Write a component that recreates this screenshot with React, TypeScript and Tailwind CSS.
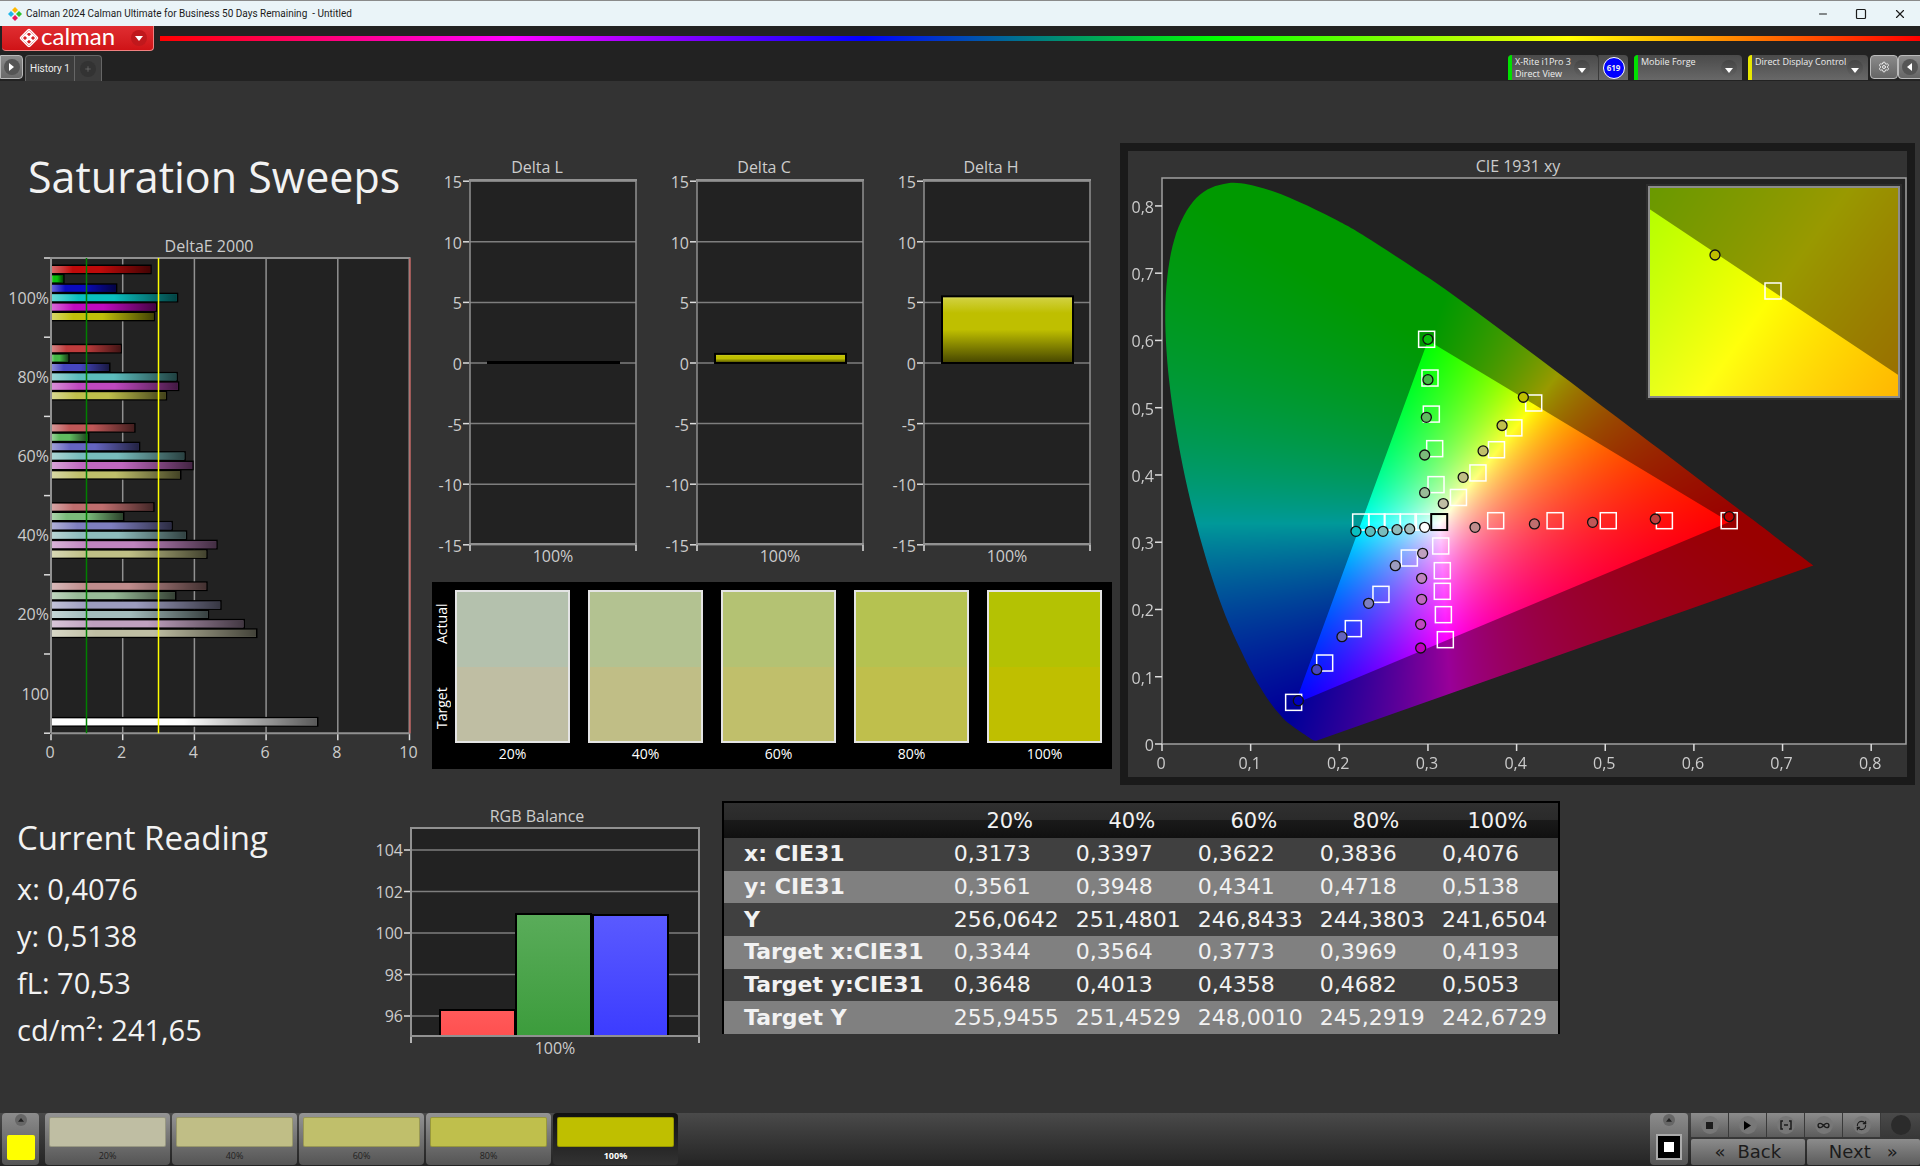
import { useLayoutEffect, useRef } from 'react';
import type { ReactNode } from 'react';
import { Infinity as InfinityIcon, Minus, Plus, RefreshCw, Settings, Square, X } from 'lucide-react';

type Point = [number, number];

const steps = ['20%', '40%', '60%', '80%', '100%'];
const targetColors = ['#bfbea3', '#c0be86', '#c0bf6b', '#bfbf4c', '#bfbf00'];
const actualColors = ['#b4c1ad', '#b3c291', '#b4c273', '#b5c251', '#b4c203'];

// red, green, blue, cyan, magenta, yellow, white
const deltaE = [
  {
    label: '100%',
    values: [2.81, 0.38, 1.85, 3.55, 2.96, 2.9, 0],
    colors: ['#bf0a0a', '#0abf0a', '#0a0abf', '#0abfbf', '#bf0abf', '#bfbf0a', '#ffffff'],
  },
  {
    label: '80%',
    values: [1.98, 0.52, 1.66, 3.54, 3.58, 3.24, 0],
    colors: ['#bf3c3c', '#45b945', '#4646bf', '#5cbcbc', '#bf48bf', '#bfbf4c', '#ffffff'],
  },
  {
    label: '60%',
    values: [2.36, 1.07, 2.49, 3.76, 3.98, 3.64, 0],
    colors: ['#bf5757', '#60bb60', '#6464bf', '#78bcbc', '#bf68bf', '#bfbf6b', '#ffffff'],
  },
  {
    label: '40%',
    values: [2.89, 2.05, 3.4, 3.8, 4.65, 4.37, 0],
    colors: ['#bf6e6e', '#7abb7a', '#7e7ebf', '#8ebcbc', '#bf84bf', '#bfbf86', '#ffffff'],
  },
  {
    label: '20%',
    values: [4.37, 3.5, 4.76, 4.41, 5.41, 5.76, 0],
    colors: ['#bf8c8c', '#98bb98', '#9c9cbf', '#a3bcbc', '#bfa0bf', '#bfbea3', '#ffffff'],
  },
  {
    label: '100',
    values: [0, 0, 0, 0, 0, 0, 7.46],
    colors: ['#ffffff', '#ffffff', '#ffffff', '#ffffff', '#ffffff', '#ffffff', '#ffffff'],
  },
];

const tableRows = [
  { label: 'x: CIE31', values: ['0,3173', '0,3397', '0,3622', '0,3836', '0,4076'] },
  { label: 'y: CIE31', values: ['0,3561', '0,3948', '0,4341', '0,4718', '0,5138'] },
  { label: 'Y', values: ['256,0642', '251,4801', '246,8433', '244,3803', '241,6504'] },
  { label: 'Target x:CIE31', values: ['0,3344', '0,3564', '0,3773', '0,3969', '0,4193'] },
  { label: 'Target y:CIE31', values: ['0,3648', '0,4013', '0,4358', '0,4682', '0,5053'] },
  { label: 'Target Y', values: ['255,9455', '251,4529', '248,0010', '245,2919', '242,6729'] },
];

const targets: Point[] = [
  [0.2241, 0.33], [0.2425, 0.33], [0.2598, 0.33], [0.2779, 0.33], [0.2945, 0.33],
  [0.3764, 0.332], [0.4434, 0.332], [0.5034, 0.332], [0.5667, 0.332], [0.6398, 0.332],
  [0.2985, 0.6017], [0.3023, 0.5441], [0.3038, 0.4905], [0.3076, 0.4391], [0.3091, 0.3856],
  [0.1485, 0.0619], [0.1835, 0.1204], [0.2158, 0.1715], [0.247, 0.2225], [0.279, 0.2765],
  [0.3196, 0.1551], [0.3174, 0.1923], [0.3162, 0.227], [0.3162, 0.2577], [0.3144, 0.2944],
  [0.3344, 0.3665], [0.3564, 0.403], [0.3773, 0.4375], [0.3969, 0.47], [0.4193, 0.507],
];

const readings: { at: Point; fill: string }[] = [
  { at: [0.2188, 0.3162], fill: '#0abfbf' },
  { at: [0.235, 0.3162], fill: '#5cbcbc' },
  { at: [0.2493, 0.3162], fill: '#78bcbc' },
  { at: [0.2651, 0.3186], fill: '#8ebcbc' },
  { at: [0.2794, 0.3197], fill: '#a3bcbc' },
  { at: [0.2963, 0.3221], fill: '#ffffff' },
  { at: [0.3531, 0.3221], fill: '#bf8c8c' },
  { at: [0.4201, 0.3272], fill: '#bf6e6e' },
  { at: [0.4857, 0.3296], fill: '#bf5757' },
  { at: [0.5565, 0.3345], fill: '#bf3c3c' },
  { at: [0.6398, 0.3382], fill: '#bf0000' },
  { at: [0.3, 0.6017], fill: '#0abf0a' },
  { at: [0.3, 0.5417], fill: '#45b945' },
  { at: [0.2982, 0.4857], fill: '#60bb60' },
  { at: [0.2963, 0.4297], fill: '#7abb7a' },
  { at: [0.2963, 0.3737], fill: '#98bb98' },
  { at: [0.1538, 0.0644], fill: '#0000bf' },
  { at: [0.1745, 0.1105], fill: '#4646bf' },
  { at: [0.203, 0.1596], fill: '#6464bf' },
  { at: [0.2331, 0.2091], fill: '#7e7ebf' },
  { at: [0.2632, 0.2651], fill: '#9c9cbf' },
  { at: [0.2918, 0.1427], fill: '#bf00bf' },
  { at: [0.2918, 0.1779], fill: '#bf48bf' },
  { at: [0.2929, 0.2151], fill: '#bf68bf' },
  { at: [0.2929, 0.2463], fill: '#bf84bf' },
  { at: [0.294, 0.2835], fill: '#bfa0bf' },
  { at: [0.3173, 0.3575], fill: '#bfbea3' },
  { at: [0.3397, 0.3965], fill: '#c0be86' },
  { at: [0.3622, 0.4358], fill: '#c0bf6b' },
  { at: [0.3836, 0.4735], fill: '#bfbf4c' },
  { at: [0.4076, 0.5155], fill: '#bfbf00' },
];

// CIE 1931 spectral locus, 380 nm to 700 nm
const locus: Point[] = [
  [0.1741, 0.005], [0.1714, 0.0051], [0.1689, 0.0069], [0.1644, 0.0109], [0.1566, 0.0177],
  [0.144, 0.0297], [0.1355, 0.0399], [0.1241, 0.0578], [0.1096, 0.0868], [0.0913, 0.1327],
  [0.0687, 0.2007], [0.0454, 0.295], [0.0235, 0.4127], [0.0082, 0.5384], [0.0039, 0.6548],
  [0.0139, 0.7502], [0.0389, 0.812], [0.0743, 0.8338], [0.1142, 0.8262], [0.1547, 0.8059],
  [0.1929, 0.7816], [0.2296, 0.7543], [0.3016, 0.6923], [0.3731, 0.6245], [0.4441, 0.5547],
  [0.5125, 0.4866], [0.5752, 0.4242], [0.627, 0.3725], [0.6658, 0.334], [0.6915, 0.3083],
  [0.719, 0.2809], [0.7347, 0.2653],
];

const gamut: Point[] = [[0.64, 0.33], [0.3, 0.6], [0.15, 0.06]];

function chromaticityToRgb(x: number, y: number) {
  const z = 1 - x - y;
  const r = Math.max(0, 3.2405 * x - 1.5371 * y - 0.4985 * z);
  const g = Math.max(0, -0.9693 * x + 1.876 * y + 0.0416 * z);
  const b = Math.max(0, 0.0556 * x - 0.204 * y + 1.0572 * z);
  const max = Math.max(r, g, b, 0.0001);
  return [(r / max) * 255, (g / max) * 255, (b / max) * 255];
}

interface ChromaticityProps {
  width: number;
  height: number;
  xRange: Point;
  yRange: Point;
}

function Chromaticity({ width, height, xRange, yRange }: ChromaticityProps) {
  const ref = useRef<HTMLCanvasElement>(null);

  useLayoutEffect(() => {
    const ctx = ref.current?.getContext('2d');
    if (!ctx) return;
    const [x0, x1] = xRange;
    const [y0, y1] = yRange;
    const toPx = ([x, y]: Point): Point => [
      ((x - x0) / (x1 - x0)) * width,
      height - ((y - y0) / (y1 - y0)) * height,
    ];

    const image = ctx.createImageData(width, height);
    for (let py = 0; py < height; py++) {
      for (let px = 0; px < width; px++) {
        const [r, g, b] = chromaticityToRgb(
          x0 + (px / width) * (x1 - x0),
          y0 + ((height - py) / height) * (y1 - y0),
        );
        const i = (py * width + px) * 4;
        image.data[i] = r;
        image.data[i + 1] = g;
        image.data[i + 2] = b;
        image.data[i + 3] = 255;
      }
    }
    ctx.globalCompositeOperation = 'source-over';
    ctx.putImageData(image, 0, 0);

    // Dim everything outside of the Rec.709 triangle
    const shade = new Path2D();
    shade.rect(0, 0, width, height);
    gamut.map(toPx).forEach(([x, y], i) => (i ? shade.lineTo(x, y) : shade.moveTo(x, y)));
    shade.closePath();
    ctx.fillStyle = 'rgba(0, 0, 0, 0.4)';
    ctx.fill(shade, 'evenodd');

    // Keep only the horseshoe
    const pts = locus.map(toPx);
    const shoe = new Path2D();
    shoe.moveTo(...pts[0]);
    for (let i = 0; i < pts.length - 1; i++) {
      const a = pts[Math.max(0, i - 1)];
      const b = pts[i];
      const c = pts[i + 1];
      const d = pts[Math.min(pts.length - 1, i + 2)];
      shoe.bezierCurveTo(
        b[0] + (c[0] - a[0]) / 6, b[1] + (c[1] - a[1]) / 6,
        c[0] - (d[0] - b[0]) / 6, c[1] - (d[1] - b[1]) / 6,
        c[0], c[1],
      );
    }
    shoe.closePath();
    ctx.globalCompositeOperation = 'destination-in';
    ctx.fillStyle = '#000';
    ctx.fill(shoe);
  }, [width, height, xRange, yRange]);

  return <canvas ref={ref} width={width} height={height} className="block w-full h-full" />;
}

function DeltaEChart() {
  const left = 51;
  const top = 24;
  const unit = 35.85;
  const group = 79.2;
  const bottom = top + group * 6;
  const right = left + unit * 10;

  return (
    <svg viewBox="0 0 424 535" className="block w-full" role="img" aria-label="DeltaE 2000">
      <defs>
        <linearGradient id="bar-shine">
          <stop offset="0" stopColor="#fff" stopOpacity="0.4" />
          <stop offset="0.22" stopColor="#fff" stopOpacity="0" />
          <stop offset="0.5" stopColor="#000" stopOpacity="0" />
          <stop offset="1" stopColor="#000" stopOpacity="0.65" />
        </linearGradient>
      </defs>
      <text x="209" y="18" textAnchor="middle" className="fill-[#ccc] text-base">DeltaE 2000</text>
      <rect x={left} y={top} width={right - left} height={bottom - top} fill="#222" />
      {[2, 4, 6, 8].map((v) => (
        <line key={v} x1={left + v * unit} x2={left + v * unit} y1={top} y2={bottom} stroke="#919191" strokeWidth="1.5" />
      ))}
      {deltaE.map(({ label, values, colors }, g) => (
        <g key={label}>
          <text x="49" y={top + group * (g + 0.5) + 6} textAnchor="end" className="fill-[#ccc] text-base">
            {label}
          </text>
          {values.map((v, i) =>
            v > 0 ? (
              <g key={i}>
                <rect x={left} y={top + group * g + 6.5 + i * 9.4} width={v * unit} height="9.8" fill="#000" />
                <rect x={left} y={top + group * g + 8 + i * 9.4} width={v * unit - 1.5} height="7" fill={colors[i]} />
                <rect x={left} y={top + group * g + 8 + i * 9.4} width={v * unit - 1.5} height="7" fill="url(#bar-shine)" />
              </g>
            ) : null,
          )}
        </g>
      ))}
      <path d={`M${left} ${bottom}V${top}H${right}V${bottom}H${left}`} fill="none" stroke="#919191" strokeWidth="2" />
      {[0, 1, 2, 3, 4, 5, 6].map((i) => (
        <line key={i} x1="44" x2="50" y1={top + group * i} y2={top + group * i} stroke="#ddd" strokeWidth="1.5" />
      ))}
      {[0, 2, 4, 6, 8, 10].map((v) => (
        <g key={v}>
          <line x1={left + v * unit} x2={left + v * unit} y1={bottom + 1} y2={bottom + 7} stroke="#ddd" strokeWidth="1.5" />
          <text x={left + v * unit - 1} y="524" textAnchor="middle" className="fill-[#ccc] text-base">{v}</text>
        </g>
      ))}
      <line x1="86.5" x2="86.5" y1={top} y2={bottom} stroke="#008000" strokeWidth="1.5" />
      <line x1="158.500" x2="158.500" y1={top} y2={bottom} stroke="#ff0" strokeWidth="1.5" />
      <line x1="410" x2="410" y1={top} y2={bottom} stroke="#d9534f" />
    </svg>
  );
}

function DeltaChart({ name, value }: { name: string; value: number }) {
  const yOf = (v: number) => 208 - v * 12.12;
  const barTop = yOf(Math.max(value, 0));

  return (
    <svg viewBox="0 0 227 415" className="block flex-1 min-w-0" role="img" aria-label={name}>
      <defs>
        <linearGradient id="delta-fill" x2="0" y2="1">
          <stop offset="0" stopColor="#dede6a" />
          <stop offset="0.05" stopColor="#cfcf38" />
          <stop offset="0.25" stopColor="#bfbf00" />
          <stop offset="0.5" stopColor="#bfbf00" />
          <stop offset="1" stopColor="#454500" />
        </linearGradient>
      </defs>
      <text x="113" y="18" textAnchor="middle" className="fill-[#ccc] text-base">{name}</text>
      <rect x="46" y="25" width="166" height="364" fill="#222" />
      {[15, 10, 5, 0, -5, -10, -15].map((v) => (
        <g key={v}>
          <line x1="46" x2="212" y1={yOf(v)} y2={yOf(v)} stroke="#7e7e7e" strokeWidth="1.5" />
          <line x1="39" x2="45" y1={yOf(v)} y2={yOf(v)} stroke="#ddd" strokeWidth="1.5" />
          <text x="38" y={yOf(v) + 7} textAnchor="end" className="fill-[#ccc] text-base">{v}</text>
        </g>
      ))}
      <path d="M46 390V25H212V390" fill="none" stroke="#919191" strokeWidth="1.5" />
      <path d="M45 25H213M45 389H213" stroke="#919191" strokeWidth="2" />
      <path d="M46 390V396M212 390V396" stroke="#ddd" strokeWidth="1.5" />
      {value > 0 ? (
        <rect x="64" y={barTop} width="131" height={208 - barTop} fill="url(#delta-fill)" stroke="#000" strokeWidth="2" />
      ) : (
        <rect x="63" y="206" width="133" height="3" fill="#000" />
      )}
      <text x="129" y="407" textAnchor="middle" className="fill-[#ccc] text-base">100%</text>
    </svg>
  );
}

const fullRange: Point = [0, 0.8415];
const insetX: Point = [0.3943, 0.4443];
const insetY: Point = [0.4803, 0.5303];

function CieChart() {
  const cx = (x: number) => 34 + x * 886.5;
  const cy = (y: number) => 593 - y * 672.6;
  const ticks = [0, 1, 2, 3, 4, 5, 6, 7, 8];

  return (
    <svg viewBox="0 0 779 626" className="block w-full" role="img" aria-label="CIE 1931 xy">
      <text x="390" y="21" textAnchor="middle" className="fill-[#ccc] text-base">CIE 1931 xy</text>
      <rect x="34" y="27" width="745" height="566" fill="#222" />
      <foreignObject x="34" y="27" width="746" height="566">
        <Chromaticity width={746} height={566} xRange={fullRange} yRange={fullRange} />
      </foreignObject>
      <rect x="34" y="27" width="744" height="566" fill="none" stroke="#a0a0a0" strokeWidth="1.5" />
      {ticks.map((t) => (
        <g key={t}>
          <line x1={cx(t / 10)} x2={cx(t / 10)} y1="593" y2="600" stroke="#ddd" strokeWidth="1.5" />
          <line x1="27" x2="34" y1={cy(t / 10)} y2={cy(t / 10)} stroke="#ddd" strokeWidth="1.5" />
          <text x={cx(t / 10) - 1} y="618" textAnchor="middle" className="fill-[#ccc] text-base">
            {t ? `0,${t}` : '0'}
          </text>
          <text x="26" y={cy(t / 10) + 7} textAnchor="end" className="fill-[#ccc] text-base">
            {t ? `0,${t}` : '0'}
          </text>
        </g>
      ))}
      {targets.map(([x, y]) => (
        <rect key={`${x}-${y}`} x={cx(x) - 8} y={cy(y) - 8} width="16" height="16" fill="none" stroke="#fff" strokeWidth="1.5" />
      ))}
      <rect x={cx(0.3127) - 8} y={cy(0.33) - 8} width="16" height="16" fill="none" stroke="#000" strokeWidth="2" />
      {readings.map(({ at: [x, y], fill }) => (
        <circle key={`${x}-${y}`} cx={cx(x)} cy={cy(y)} r="5" fill={fill} stroke="#111" strokeWidth="1.3" />
      ))}
      <rect x="518" y="33" width="256" height="216" fill="#2d2d2d" />
      <foreignObject x="521" y="36" width="250" height="210">
        <Chromaticity width={250} height={210} xRange={insetX} yRange={insetY} />
      </foreignObject>
      <rect x="521" y="36" width="250" height="210" fill="none" stroke="#8c8c8c" strokeWidth="2" />
      <circle cx="587" cy="104" r="5" fill="#bfbf00" stroke="#111" strokeWidth="1.3" />
      <rect x="637" y="132" width="16" height="16" fill="none" stroke="#fff" strokeWidth="1.5" />
    </svg>
  );
}

const balance = [
  { x: 70, top: 206, fill: 'url(#bal-r)' },
  { x: 146, top: 110, fill: 'url(#bal-g)' },
  { x: 223, top: 111, fill: 'url(#bal-b)' },
];

function RgbBalance() {
  return (
    <svg viewBox="0 0 335 255" className="block w-full" role="img" aria-label="RGB Balance">
      <defs>
        <linearGradient id="bal-r" x2="0" y2="1">
          <stop stopColor="#ff5a5a" />
          <stop offset="1" stopColor="#ff5050" />
        </linearGradient>
        <linearGradient id="bal-g" x2="0" y2="1">
          <stop stopColor="#5aac5a" />
          <stop offset="1" stopColor="#3c9c3c" />
        </linearGradient>
        <linearGradient id="bal-b" x2="0" y2="1">
          <stop stopColor="#5a5aff" />
          <stop offset="1" stopColor="#3c3cff" />
        </linearGradient>
      </defs>
      <text x="167" y="18" textAnchor="middle" className="fill-[#ccc] text-base">RGB Balance</text>
      <rect x="41" y="24" width="288" height="208" fill="#222" />
      {[104, 102, 100, 98, 96].map((v, i) => (
        <g key={v}>
          <line x1="41" x2="329" y1={46 + i * 41.5} y2={46 + i * 41.5} stroke="#7e7e7e" strokeWidth="1.5" />
          <line x1="34" x2="40" y1={46 + i * 41.5} y2={46 + i * 41.5} stroke="#ddd" strokeWidth="1.5" />
          <text x="33" y={52 + i * 41.5} textAnchor="end" className="fill-[#ccc] text-base">{v}</text>
        </g>
      ))}
      {balance.map(({ x, top, fill }) => (
        <path key={x} d={`M${x} 232V${top}H${x + 75}V232`} fill={fill} stroke="#000" strokeWidth="2" />
      ))}
      <rect x="41" y="24" width="288" height="208" fill="none" stroke="#919191" strokeWidth="2" />
      <path d="M41 233V239M329 233V239" stroke="#ddd" strokeWidth="1.5" />
      <text x="185" y="250" textAnchor="middle" className="fill-[#ccc] text-base">100%</text>
    </svg>
  );
}

function Swatches() {
  return (
    <div className="flex bg-black pt-2 pr-[10px] pb-1">
      <div className="w-[19px] mr-1 text-sm leading-5 text-white">
        <span className="flex items-center justify-center h-[67px] [writing-mode:vertical-rl] rotate-180">Actual</span>
        <span className="flex items-center justify-center h-[103px] [writing-mode:vertical-rl] rotate-180">Target</span>
      </div>
      <div className="flex-1 grid grid-cols-5 gap-[18px]">
        {steps.map((step, i) => (
          <div key={step} className="text-center text-sm leading-[22px] text-white">
            <div className="h-[153px] border-2 border-[#e4e4e4] flex flex-col">
              <div className="flex-1" style={{ backgroundColor: actualColors[i] }} />
              <div className="flex-1" style={{ backgroundColor: targetColors[i] }} />
            </div>
            {step}
          </div>
        ))}
      </div>
    </div>
  );
}

function ReadingsTable() {
  return (
    <table className="w-full h-[233px] table-fixed border-collapse border-2 border-b-0 border-black text-[#f2f2f2] text-[22px] leading-[26px] font-['DejaVu_Sans',sans-serif]">
      <colgroup>
        <col className="w-[27%]" />
      </colgroup>
      <thead>
        <tr className="h-[36px] bg-[linear-gradient(#303030,#2a2a2a_50%,#1a1a1a_50%,#101010)]">
          <td />
          {steps.map((s) => (
            <th key={s} scope="col" className="text-[21px] font-normal">{s}</th>
          ))}
        </tr>
      </thead>
      <tbody>
        {tableRows.map(({ label, values }) => (
          <tr key={label} className="odd:bg-[#404040] even:bg-[#808080]">
            <th scope="row" className="pl-5 text-left font-bold whitespace-nowrap">{label}</th>
            {values.map((v) => (
              <td key={v} className="pl-[5px]">{v}</td>
            ))}
          </tr>
        ))}
      </tbody>
    </table>
  );
}

function DropArrow() {
  return (
    <span className="shrink-0 flex items-center justify-center size-4 rounded-full bg-linear-to-b from-[#444] to-[#606060]">
      <svg viewBox="0 0 8 5" className="w-2 mt-1">
        <path d="M0 0h8l-4 5z" fill="#fff" />
      </svg>
    </span>
  );
}

function Device({ color, width, children }: { color: string; width: string; children: ReactNode }) {
  return (
    <button className={`flex items-start h-[25px] rounded-t text-left bg-linear-to-b from-[#4a4a4a] to-[#686868] ${width}`}>
      <span className={`w-1 h-full rounded-tl mr-[3px] ${color}`} />
      {children}
    </button>
  );
}

function TitleBar() {
  return (
    <div className="flex items-center h-[26px] pl-2 pr-[13px] bg-[#eaf4f8] border-t border-[#8a8a8a] text-[#1b1b1b]">
      <svg viewBox="0 0 14 14" className="size-[14px] mr-1">
        <path d="M7 0l3 3-3 3-3-3z" fill="#ffb900" />
        <path d="M3 4l3 3-3 3-3-3z" fill="#1fb6ea" />
        <path d="M11 4l3 3-3 3-3-3z" fill="#2fc22f" />
        <path d="M7 8l3 3-3 3-3-3z" fill="#e8175d" />
      </svg>
      <span className="text-[10px] font-['Roboto',sans-serif] whitespace-pre">
        Calman 2024 Calman Ultimate for Business 50 Days Remaining  - Untitled
      </span>
      <div className="flex items-center gap-[26px] ml-auto">
        <button aria-label="Minimize"><Minus size={12} strokeWidth={2} /></button>
        <button aria-label="Maximize"><Square size={12} strokeWidth={2.4} /></button>
        <button aria-label="Close"><X size={14} strokeWidth={2} /></button>
      </div>
    </div>
  );
}

function Header() {
  return (
    <header className="bg-[#222]">
      <div className="flex items-start h-[29px]">
        <button className="flex items-center h-[25px] w-[152px] ml-[2px] pl-[17px] pr-[6px] rounded-b bg-linear-to-b from-[#e02d31] to-[#cf1216] border-b border-r border-[#f08080] text-white">
          <svg viewBox="0 0 20 20" className="size-5">
            <rect x="3.6" y="3.6" width="12.8" height="12.8" rx="1.5" transform="rotate(45 10 10)" fill="none" stroke="#fff" strokeWidth="1.4" />
            <g fill="none" stroke="#fff" strokeWidth="1.3">
              <path d="M10 3.2l3 3-3 3-3-3zM6 7l3 3-3 3-3-3zM14 7l3 3-3 3-3-3zM10 10.8l3 3-3 3-3-3z" />
            </g>
          </svg>
          <span className="ml-[2px] -mt-1 text-2xl leading-6 font-['Lato',sans-serif]">calman</span>
          <span className="ml-auto flex items-center justify-center size-4 rounded-full bg-[#c0181c]">
            <svg viewBox="0 0 8 5" className="w-2"><path d="M0 0h8l-4 5z" fill="#fff" /></svg>
          </span>
        </button>
        <div className="flex-1 h-[5px] mt-[10px] ml-[6px] bg-[linear-gradient(90deg,#f00,#f0f,#00f,#0f0,#ff0,#f00)]" />
      </div>
      <div className="flex items-start h-[26px] text-[#eee]">
        <button aria-label="Show panel" className="flex items-center justify-center w-[23px] h-6 rounded-r border border-[#bbb] bg-linear-to-b from-[#8a8a8a] to-[#6a6a6a]">
          <span className="flex items-center justify-center size-4 rounded-full bg-[#555]">
            <svg viewBox="0 0 5 8" className="h-2"><path d="M0 0v8l5-4z" fill="#fff" /></svg>
          </span>
        </button>
        <div className="flex h-[26px] ml-[2px] rounded-t border border-b-0 border-[#666] bg-[#3c3c3c]">
          <button className="px-1 border-r border-[#666] text-[10px] font-['Roboto',sans-serif] whitespace-nowrap">History 1</button>
          <button aria-label="Add tab" className="flex items-center justify-center w-[26px] text-[#777]">
            <span className="flex items-center justify-center size-4 rounded-full bg-[#333]"><Plus size={8} /></span>
          </button>
        </div>
        <div className="flex items-start gap-[6px] ml-auto text-[9px] leading-3">
          <div className="flex">
            <Device color="bg-[#00e000]" width="w-[90px]">
              <span className="w-[58px] pt-px whitespace-nowrap">X-Rite i1Pro 3<br />Direct View</span>
              <span className="mt-[5px] ml-px"><DropArrow /></span>
            </Device>
            <div className="flex items-center justify-center w-[30px] h-[25px] border-l border-[#3a3a3a] rounded-tr bg-linear-to-b from-[#4a4a4a] to-[#686868]">
              <span className="flex items-center justify-center size-[22px] rounded-full border border-white bg-[#00f] text-[8px] font-bold">619</span>
            </div>
          </div>
          <Device color="bg-[#00e000]" width="w-[108px]">
            <span className="flex-1 pt-px whitespace-nowrap">Mobile Forge</span>
            <span className="mt-[5px] mr-[5px]"><DropArrow /></span>
          </Device>
          <Device color="bg-[#e8e800]" width="w-[120px]">
            <span className="flex-1 pt-px whitespace-nowrap">Direct Display Control</span>
            <span className="mt-[5px] mr-[5px]"><DropArrow /></span>
          </Device>
          <div className="flex -ml-1">
            <button aria-label="Settings" className="flex items-center justify-center w-7 h-6 rounded border border-[#bbb] bg-linear-to-b from-[#8a8a8a] to-[#666]">
              <Settings size={12} />
            </button>
            <button aria-label="Collapse" className="flex items-center justify-center w-[22px] h-6 rounded-l border border-r-0 border-[#bbb] bg-linear-to-b from-[#8a8a8a] to-[#666]">
              <span className="flex items-center justify-center size-4 rounded-full bg-[#555]">
                <svg viewBox="0 0 5 8" className="h-2"><path d="M5 0v8L0 4z" fill="#fff" /></svg>
              </span>
            </button>
          </div>
        </div>
      </div>
    </header>
  );
}

function TransportButton({ label, children }: { label: string; children: ReactNode }) {
  return (
    <button aria-label={label} className="flex items-center justify-center w-[38px] h-6 border-r border-[#3a3a3a] bg-linear-to-b from-[#8c8c8c] to-[#5c5c5c] text-[#1c1c1c]">
      <span className="flex items-center justify-center size-[18px] rounded-full bg-[#777]">{children}</span>
    </button>
  );
}

function Footer() {
  return (
    <footer className="flex h-[53px] bg-linear-to-b from-[#4a4a4a] to-[#242424]">
      <button aria-label="Pattern" className="flex flex-col items-center w-[37px] h-[52px] ml-[2px] rounded bg-linear-to-b from-[#8c8c8c] to-[#555]">
        <span className="flex items-center justify-center size-3 mt-[1px] rounded-full bg-[#666]">
          <svg viewBox="0 0 8 5" className="w-[6px]"><path d="M0 5h8L4 0z" fill="#222" /></svg>
        </span>
        <span className="w-7 h-[25px] mt-[9px] rounded-xs bg-[#ff0]" />
      </button>
      <div className="flex gap-[2px] ml-[6px]">
        {steps.map((step, i) => (
          <button
            key={step}
            className={`w-[125px] h-[52px] px-1 pt-1 rounded text-[9px] leading-[18px] ${
              step === '100%'
                ? 'bg-linear-to-b from-[#111] to-[#333] text-white font-bold'
                : 'bg-linear-to-b from-[#949494] to-[#555] text-[#222]'
            }`}
          >
            <span className="block h-[30px] rounded-xs border border-black/20" style={{ backgroundColor: targetColors[i] }} />
            {step}
          </button>
        ))}
      </div>
      <div className="flex ml-auto">
        <button aria-label="Window pattern" className="flex flex-col items-center w-[38px] h-[52px] rounded bg-linear-to-b from-[#8c8c8c] to-[#555]">
          <span className="flex items-center justify-center size-3 mt-[1px] rounded-full bg-[#666]">
            <svg viewBox="0 0 8 5" className="w-[6px]"><path d="M0 5h8L4 0z" fill="#222" /></svg>
          </span>
          <span className="flex items-center justify-center size-[26px] mt-2 border-2 border-[#aaa] bg-black"><span className="size-[10px] bg-white" /></span>
        </button>
        <div className="w-[229px] ml-[3px]">
          <div className="flex">
            <TransportButton label="Stop"><span className="size-[7px] bg-[#1c1c1c]" /></TransportButton>
            <TransportButton label="Play"><svg viewBox="0 0 8 10" className="h-[9px]"><path d="M0 0v10l8-5z" /></svg></TransportButton>
            <TransportButton label="Read once">
              <svg viewBox="0 0 12 10" className="w-3" fill="none" stroke="currentColor" strokeWidth="1.5"><path d="M3 1H1v8h2M9 1h2v8H9M4 5h4" /></svg>
            </TransportButton>
            <TransportButton label="Read continuously"><InfinityIcon size={13} strokeWidth={2.5} /></TransportButton>
            <TransportButton label="Refresh"><RefreshCw size={11} strokeWidth={2.5} /></TransportButton>
            <span className="flex-1 flex items-center justify-center"><span className="size-5 rounded-full bg-[#2b2b2b]" /></span>
          </div>
          <div className="flex gap-[2px] mt-[2px] text-[18px] leading-[26px] text-[#1c1c1c] font-['DejaVu_Sans',sans-serif]">
            <button className="flex-1 flex items-center justify-center gap-3 h-[26px] rounded-xs bg-linear-to-b from-[#8c8c8c] to-[#5c5c5c]">
              <span>«</span>Back
            </button>
            <button className="flex-1 flex items-center justify-center gap-4 h-[26px] rounded-xs bg-linear-to-b from-[#8c8c8c] to-[#5c5c5c]">
              Next<span>»</span>
            </button>
          </div>
        </div>
      </div>
    </footer>
  );
}

export default function App() {
  return (
    <div className="flex flex-col min-h-screen bg-[#333] font-['Open_Sans',sans-serif]">
      <TitleBar />
      <Header />
      <main className="flex-1 pt-[62px]">
        <div className="grid grid-cols-[424fr_696fr_795fr] items-start pr-[5px]">
          <section>
            <h1 className="pt-[2px] pl-7 mb-[25px] text-[43px] leading-[64px] text-[#f2f2f2] whitespace-nowrap">Saturation Sweeps</h1>
            <DeltaEChart />
          </section>
          <section className="pt-3">
            <div className="flex pr-[15px] mb-3">
              <DeltaChart name="Delta L" value={0} />
              <DeltaChart name="Delta C" value={0.75} />
              <DeltaChart name="Delta H" value={5.5} />
            </div>
            <div className="px-2">
              <Swatches />
            </div>
          </section>
          <section className="border-8 border-[#1a1a1a]">
            <CieChart />
          </section>
        </div>

        <div className="grid grid-cols-[370fr_335fr_17fr_838fr_360fr] items-start mt-4">
          <section className="pl-[17px] pt-3 text-[29px] leading-[47px] text-[#f2f2f2]">
            <h2 className="text-[33px] leading-[50px] mb-[2px]">Current Reading</h2>
            <p>x: 0,4076</p>
            <p>y: 0,5138</p>
            <p>fL: 70,53</p>
            <p>cd/m²: 241,65</p>
          </section>
          <section className="pt-[3px]">
            <RgbBalance />
          </section>
          <section className="col-start-4">
            <ReadingsTable />
          </section>
        </div>
      </main>
      <Footer />
    </div>
  );
}
